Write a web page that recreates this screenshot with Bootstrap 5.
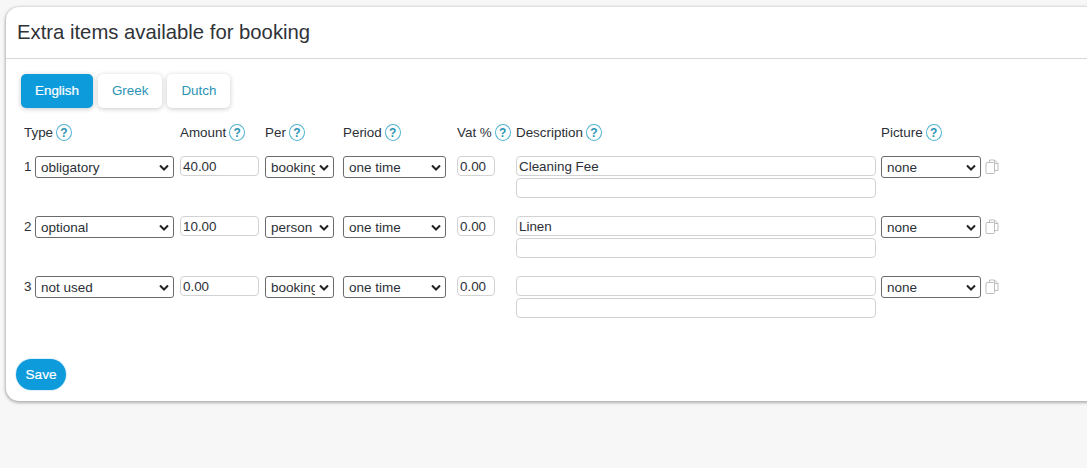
<!DOCTYPE html>
<html lang="en">
<head>
<meta charset="utf-8">
<title>Extra items</title>
<link href="https://cdn.jsdelivr.net/npm/bootstrap@5.3.0/dist/css/bootstrap.min.css" rel="stylesheet">
<style>
html,body{height:100%;overflow:hidden}
body{background:#f7f7f7;font-family:"Liberation Sans",Arial,sans-serif;font-size:13.4px;color:#2b3036;padding:7px 0 0 6px}
.panel{background:#fff;border-radius:13px;margin-right:-30px;height:394px;box-shadow:0 1px 3px 1px rgba(0,0,0,.28)}
.panel-head{height:52px;border-bottom:1px solid #d6d6d6;padding:11px 11px 0;font-size:20.3px;line-height:28px;color:#2f3337}
.panel-body{padding:15px 10px 0}
.tab-row{gap:5px;margin-left:5px}
.tab-btn{height:34px;padding:0 14px;line-height:33px;font-size:13.4px;border-radius:5px;background:#fff;color:#2b93b5;box-shadow:0 1px 5px rgba(0,0,0,.22);text-decoration:none}
.tab-btn.is-on{background:#0e9bdc;color:#fff;-webkit-text-stroke:.2px #fff}
.items{display:grid;grid-template-columns:11px 139px 6px 79px 6px 69px 9px 103px 11px 38px 21px 360px 5px 100px 4px 16px;margin-left:8px}
.hd{height:48px;padding-top:16px;line-height:18px;white-space:nowrap;display:flex;align-items:flex-start}
.qm{display:inline-flex;width:16px;height:17px;margin-left:3px;margin-top:0;border:1.5px solid #4fb3cf;border-radius:50%;color:#2b93b5;font-size:12px;font-weight:700;line-height:1;align-items:center;justify-content:center;flex:none}
.num{line-height:22px;white-space:nowrap}
.sel{appearance:none;-webkit-appearance:none;display:block;width:100%;height:22px;padding:1px 18px 0 5px;border:1px solid #6b6b6b;border-radius:3px;font:13.5px/19px "Liberation Sans",Arial,sans-serif;color:#2b3036;background:#fff url("data:image/svg+xml,%3Csvg xmlns='http://www.w3.org/2000/svg' width='10' height='7'%3E%3Cpath d='M1 1.5l4 4 4-4' fill='none' stroke='%23222' stroke-width='2'/%3E%3C/svg%3E") no-repeat right 4px center}
.inp{display:block;width:100%;height:20px;padding:0 2px;border:1px solid #d2d2d2;border-radius:4px;font:13.4px/18px "Liberation Sans",Arial,sans-serif;color:#2b3036;background:#fff}
.desc-stack{display:flex;flex-direction:column;gap:2px}
.row-gap{grid-column:1/-1;height:18px}
.copy-ic{display:block;margin-top:3px}
.save-btn{display:inline-block;margin-top:23px;border-radius:16px;height:31px;line-height:30px;padding:0 9.5px;background:#0e9bdc;color:#fff;font-size:13.6px;-webkit-text-stroke:.2px #fff;border:0;box-shadow:0 0 0 1px #dff1fa}
</style>
</head>
<body>
<div class="panel">
  <div class="panel-head">Extra items available for booking</div>
  <div class="panel-body">
    <div class="d-flex tab-row">
      <a class="tab-btn is-on" href="#">English</a>
      <a class="tab-btn" href="#">Greek</a>
      <a class="tab-btn" href="#">Dutch</a>
    </div>
    <div class="items">
      <div class="hd" style="grid-column:1/3">Type<span class="qm">?</span></div><div></div>
      <div class="hd">Amount<span class="qm">?</span></div><div></div>
      <div class="hd">Per<span class="qm">?</span></div><div></div>
      <div class="hd">Period<span class="qm">?</span></div><div></div>
      <div class="hd">Vat %<span class="qm">?</span></div><div></div>
      <div class="hd">Description<span class="qm">?</span></div><div></div>
      <div class="hd">Picture<span class="qm">?</span></div><div></div><div></div>

      <div class="num">1</div>
      <div><select class="sel"><option>obligatory</option></select></div><div></div>
      <div><input class="inp" value="40.00"></div><div></div>
      <div><select class="sel"><option>booking</option></select></div><div></div>
      <div><select class="sel"><option>one time</option></select></div><div></div>
      <div><input class="inp" value="0.00"></div><div></div>
      <div class="desc-stack"><input class="inp" value="Cleaning Fee"><input class="inp"></div><div></div>
      <div><select class="sel"><option>none</option></select></div><div></div>
      <svg class="copy-ic" width="14" height="16" viewBox="0 0 14 16" fill="none" stroke="#bdbdbd"><path d="M4.5 3.5V1h5l3.5 3.5V11.5H9.5"/><path d="M9.5 1v3.5H13"/><rect x="1" y="3.5" width="8.5" height="11" rx="1"/></svg>
      <div class="row-gap"></div>

      <div class="num">2</div>
      <div><select class="sel"><option>optional</option></select></div><div></div>
      <div><input class="inp" value="10.00"></div><div></div>
      <div><select class="sel"><option>person</option></select></div><div></div>
      <div><select class="sel"><option>one time</option></select></div><div></div>
      <div><input class="inp" value="0.00"></div><div></div>
      <div class="desc-stack"><input class="inp" value="Linen"><input class="inp"></div><div></div>
      <div><select class="sel"><option>none</option></select></div><div></div>
      <svg class="copy-ic" width="14" height="16" viewBox="0 0 14 16" fill="none" stroke="#bdbdbd"><path d="M4.5 3.5V1h5l3.5 3.5V11.5H9.5"/><path d="M9.5 1v3.5H13"/><rect x="1" y="3.5" width="8.5" height="11" rx="1"/></svg>
      <div class="row-gap"></div>

      <div class="num">3</div>
      <div><select class="sel"><option>not used</option></select></div><div></div>
      <div><input class="inp" value="0.00"></div><div></div>
      <div><select class="sel"><option>booking</option></select></div><div></div>
      <div><select class="sel"><option>one time</option></select></div><div></div>
      <div><input class="inp" value="0.00"></div><div></div>
      <div class="desc-stack"><input class="inp"><input class="inp"></div><div></div>
      <div><select class="sel"><option>none</option></select></div><div></div>
      <svg class="copy-ic" width="14" height="16" viewBox="0 0 14 16" fill="none" stroke="#bdbdbd"><path d="M4.5 3.5V1h5l3.5 3.5V11.5H9.5"/><path d="M9.5 1v3.5H13"/><rect x="1" y="3.5" width="8.5" height="11" rx="1"/></svg>
      <div class="row-gap"></div>
    </div>
    <button class="save-btn" type="button">Save</button>
  </div>
</div>
<script src="https://cdn.jsdelivr.net/npm/bootstrap@5.3.0/dist/js/bootstrap.bundle.min.js"></script>
</body>
</html>
